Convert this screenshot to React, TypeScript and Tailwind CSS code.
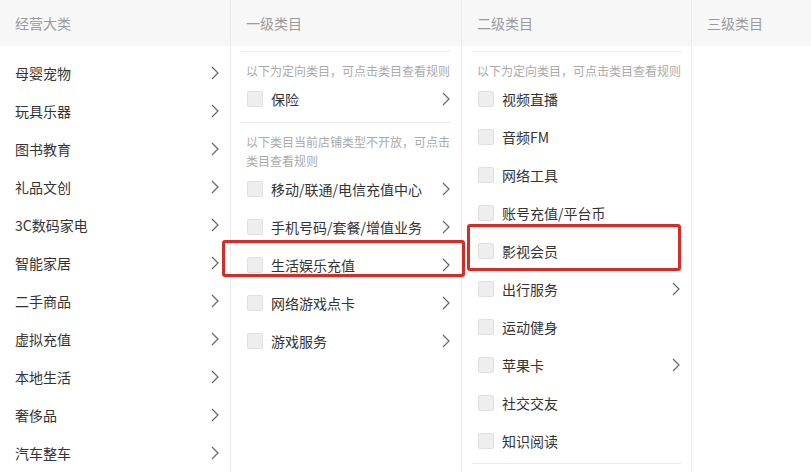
const font = { fontFamily: "'Noto Sans CJK SC', 'Noto Sans', sans-serif" };

const mainCats = ['母婴宠物', '玩具乐器', '图书教育', '礼品文创', '3C数码家电', '智能家居', '二手商品', '虚拟充值', '本地生活', '奢侈品', '汽车整车'];

const level1Open = [{ name: '保险', more: true }];
const level1Closed = [
  { name: '移动/联通/电信充值中心', more: true },
  { name: '手机号码/套餐/增值业务', more: true },
  { name: '生活娱乐充值', more: true },
  { name: '网络游戏点卡', more: true },
  { name: '游戏服务', more: true },
];

const level2 = [
  { name: '视频直播' },
  { name: '音频FM' },
  { name: '网络工具' },
  { name: '账号充值/平台币' },
  { name: '影视会员' },
  { name: '出行服务', more: true },
  { name: '运动健身' },
  { name: '苹果卡', more: true },
  { name: '社交交友' },
  { name: '知识阅读' },
];

function Chevron() {
  return (
    <svg width="8" height="14" viewBox="0 0 8 14" fill="none" className="shrink-0">
      <path d="M1 1l6 6-6 6" stroke="#666" strokeWidth="1.2" />
    </svg>
  );
}

function Header({ title }: { title: string }) {
  return (
    <div className="h-[46px] bg-[#f7f7f7] flex items-center px-[15px] text-[14px] text-[#9a9a9a]">
      {title}
    </div>
  );
}

function Hint({ children }: { children: string }) {
  return <p className="pl-[5px] -mr-[4px] text-[12px] leading-[19px] text-[#aaa]">{children}</p>;
}

function CheckRow({ name, more }: { name: string; more?: boolean }) {
  return (
    <div className="flex items-center h-[38px] pl-[6px] pr-[1px]">
      <span className="w-[16px] h-[16px] rounded-[2px] bg-[#eeeeee] border border-[#e0e0e0] shrink-0" />
      <span className="ml-[8px] flex-1 text-[14px] text-[#333]">{name}</span>
      {more && <Chevron />}
    </div>
  );
}

export default function App() {
  return (
    <div className="relative w-[811px] h-[472px] overflow-hidden bg-white flex" style={font}>
      {/* 经营大类 */}
      <div className="w-[231px] shrink-0 border-r border-[#ececec]">
        <Header title="经营大类" />
        <div className="pt-[8px]">
          {mainCats.map((c) => (
            <div key={c} className="h-[38px] flex items-center justify-between pl-[15px] pr-[11px] text-[14px] text-[#333]">
              <span>{c}</span>
              <Chevron />
            </div>
          ))}
        </div>
      </div>

      {/* 一级类目 */}
      <div className="w-[231px] shrink-0 border-r border-[#ececec]">
        <Header title="一级类目" />
        <div className="px-[10px] pt-[5px]">
          <div className="border-t border-[#ececec] pt-[9px] pb-[4px]">
            <Hint>以下为定向类目，可点击类目查看规则</Hint>
            {level1Open.map((r) => (
              <CheckRow key={r.name} {...r} />
            ))}
          </div>
          <div className="border-t border-[#ececec] pt-[9px]">
            <Hint>以下类目当前店铺类型不开放，可点击类目查看规则</Hint>
            {level1Closed.map((r) => (
              <CheckRow key={r.name} {...r} />
            ))}
          </div>
        </div>
      </div>

      {/* 二级类目 */}
      <div className="w-[230px] shrink-0 border-r border-[#ececec]">
        <Header title="二级类目" />
        <div className="px-[10px] pt-[5px]">
          <div className="border-t border-b border-[#ececec] pt-[9px] pb-[3px]">
            <Hint>以下为定向类目，可点击类目查看规则</Hint>
            {level2.map((r) => (
              <CheckRow key={r.name} {...r} />
            ))}
          </div>
        </div>
      </div>

      {/* 三级类目 */}
      <div className="flex-1">
        <Header title="三级类目" />
      </div>

      {/* annotations */}
      <div className="absolute left-[222px] top-[240px] w-[243px] h-[37px] border-[3px] border-[#d22d26] rounded-[3px]" />
      <div className="absolute left-[467px] top-[224px] w-[214px] h-[47px] border-[3px] border-[#d22d26] rounded-[3px]" />
    </div>
  );
}
